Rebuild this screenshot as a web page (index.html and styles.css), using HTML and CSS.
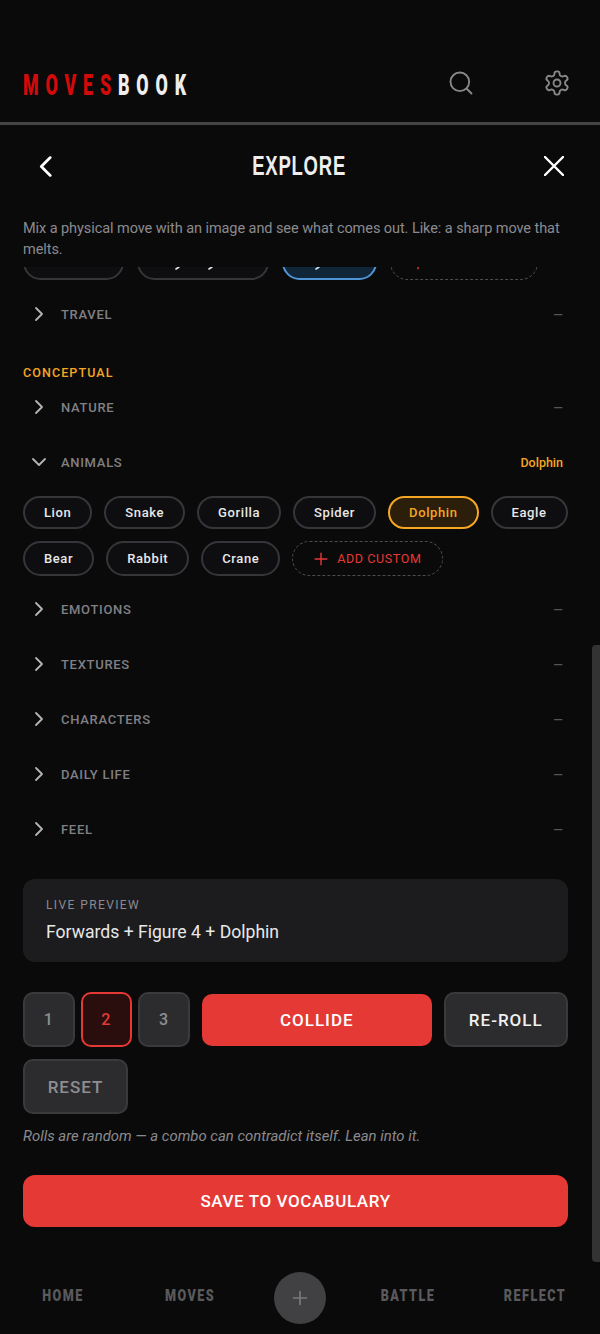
FILE: index.html
```html
<!DOCTYPE html>
<html lang="en">
<head>
    <meta charset="UTF-8">
    <meta name="viewport" content="width=device-width, initial-scale=1.0">
    <title>Movesbook - Explore</title>
    <link rel="stylesheet" href="styles.css">
</head>
<body>
    <div class="screen">
        <!-- Top header -->
        <header class="top-bar">
            <div class="logo"><span class="logo-red">MOVES</span><span class="logo-white">BOOK</span></div>
            <div class="top-icons">
                <svg class="icon-top" viewBox="0 0 24 24"><path d="m21 21-4.3-4.3"/><circle cx="11" cy="11" r="8"/></svg>
                <svg class="icon-top" viewBox="0 0 24 24"><path d="M12.22 2h-.44a2 2 0 0 0-2 2v.18a2 2 0 0 1-1 1.73l-.43.25a2 2 0 0 1-2 0l-.15-.08a2 2 0 0 0-2.73.73l-.22.38a2 2 0 0 0 .73 2.73l.15.1a2 2 0 0 1 1 1.72v.51a2 2 0 0 1-1 1.74l-.15.09a2 2 0 0 0-.73 2.73l.22.38a2 2 0 0 0 2.73.73l.15-.08a2 2 0 0 1 2 0l.43.25a2 2 0 0 1 1 1.73V20a2 2 0 0 0 2 2h.44a2 2 0 0 0 2-2v-.18a2 2 0 0 1 1-1.73l.43-.25a2 2 0 0 1 2 0l.15.08a2 2 0 0 0 2.73-.73l.22-.39a2 2 0 0 0-.73-2.73l-.15-.08a2 2 0 0 1-1-1.74v-.5a2 2 0 0 1 1-1.74l.15-.09a2 2 0 0 0 .73-2.73l-.22-.38a2 2 0 0 0-2.73-.73l-.15.08a2 2 0 0 1-2 0l-.43-.25a2 2 0 0 1-1-1.73V4a2 2 0 0 0-2-2z"/><circle cx="12" cy="12" r="3"/></svg>
            </div>
        </header>

        <!-- Title row -->
        <div class="title-bar">
            <svg class="icon-back" viewBox="0 0 12 20"><path d="M10.5 1.5 2 10l8.5 8.5"/></svg>
            <h1>EXPLORE</h1>
            <svg class="icon-close" viewBox="0 0 20 20"><path d="M1 1l18 18M19 1 1 19"/></svg>
        </div>

        <p class="intro">Mix a physical move with an image and see what comes out. Like: a sharp move that melts.</p>

        <!-- Scrolling list, already scrolled part way -->
        <main class="scroll-area">
            <!-- chip row scrolled under the intro, labels are out of view except for letter tails -->
            <div class="chips chips-cut">
                <span class="chip chip-a"></span>
                <span class="chip chip-b">
                    <svg class="tails tails-b" viewBox="0 0 36 3"><path d="M0 3l3-2M33 3l3-2"/></svg>
                </span>
                <span class="chip chip-blue">
                    <svg class="tails tails-blue" viewBox="0 0 4 3"><path d="M0 3l3-2"/></svg>
                </span>
                <span class="chip chip-add chip-d">
                    <svg class="icon-plus" viewBox="0 0 24 24"><path d="M5 12h14M12 5v14"/></svg>
                </span>
            </div>

            <div class="row">
                <svg class="chevron" viewBox="0 0 24 24"><path d="m9 18 6-6-6-6"/></svg>
                <span class="row-name">TRAVEL</span>
                <span class="row-value">—</span>
            </div>

            <div class="group-label">CONCEPTUAL</div>

            <div class="row">
                <svg class="chevron" viewBox="0 0 24 24"><path d="m9 18 6-6-6-6"/></svg>
                <span class="row-name">NATURE</span>
                <span class="row-value">—</span>
            </div>
            <div class="row">
                <svg class="chevron" viewBox="0 0 24 24"><path d="m6 9 6 6 6-6"/></svg>
                <span class="row-name">ANIMALS</span>
                <span class="row-value row-picked">Dolphin</span>
            </div>

            <div class="chips">
                <span class="chip">Lion</span>
                <span class="chip">Snake</span>
                <span class="chip">Gorilla</span>
                <span class="chip">Spider</span>
                <span class="chip chip-on">Dolphin</span>
                <span class="chip">Eagle</span>
                <span class="chip">Bear</span>
                <span class="chip">Rabbit</span>
                <span class="chip">Crane</span>
                <span class="chip chip-add">
                    <svg class="icon-plus" viewBox="0 0 24 24"><path d="M5 12h14M12 5v14"/></svg>
                    ADD CUSTOM
                </span>
            </div>

            <div class="row">
                <svg class="chevron" viewBox="0 0 24 24"><path d="m9 18 6-6-6-6"/></svg>
                <span class="row-name">EMOTIONS</span>
                <span class="row-value">—</span>
            </div>
            <div class="row">
                <svg class="chevron" viewBox="0 0 24 24"><path d="m9 18 6-6-6-6"/></svg>
                <span class="row-name">TEXTURES</span>
                <span class="row-value">—</span>
            </div>
            <div class="row">
                <svg class="chevron" viewBox="0 0 24 24"><path d="m9 18 6-6-6-6"/></svg>
                <span class="row-name">CHARACTERS</span>
                <span class="row-value">—</span>
            </div>
            <div class="row">
                <svg class="chevron" viewBox="0 0 24 24"><path d="m9 18 6-6-6-6"/></svg>
                <span class="row-name">DAILY LIFE</span>
                <span class="row-value">—</span>
            </div>
            <div class="row">
                <svg class="chevron" viewBox="0 0 24 24"><path d="m9 18 6-6-6-6"/></svg>
                <span class="row-name">FEEL</span>
                <span class="row-value">—</span>
            </div>

            <div class="preview">
                <div class="preview-label">LIVE PREVIEW</div>
                <div class="preview-value">Forwards + Figure 4 + Dolphin</div>
            </div>

            <div class="actions">
                <button class="btn btn-num">1</button>
                <button class="btn btn-num btn-num-on">2</button>
                <button class="btn btn-num">3</button>
                <button class="btn btn-collide">COLLIDE</button>
                <button class="btn btn-reroll">RE-ROLL</button>
                <button class="btn btn-reset">RESET</button>
            </div>

            <p class="note">Rolls are random — a combo can contradict itself. Lean into it.</p>

            <button class="btn-save">SAVE TO VOCABULARY</button>
        </main>

        <div class="scroll-thumb"></div>

        <!-- Bottom navigation -->
        <nav class="bottom-nav">
            <span class="nav-item">HOME</span>
            <span class="nav-item">MOVES</span>
            <span class="nav-add">
                <svg class="icon-nav-add" viewBox="0 0 24 24"><path d="M5 12h14M12 5v14"/></svg>
            </span>
            <span class="nav-item">BATTLE</span>
            <span class="nav-item">REFLECT</span>
        </nav>
    </div>
</body>
</html>
```

FILE: styles.css
```css
/* Page */
html, body {
    margin: 0;
    padding: 0;
    height: 1334px;
    overflow: hidden;
    background-color: #0a0a0b;
}
body {
    font-family: Roboto, "Liberation Sans", sans-serif;
    color: #fff;
}
svg {
    fill: none;
    stroke: currentColor;
    stroke-linecap: round;
    stroke-linejoin: round;
    flex-shrink: 0;
}
.screen {
    position: relative;
    display: flex;
    flex-direction: column;
    height: 1334px;
    overflow: hidden;
}

/* Header */
.top-bar {
    display: flex;
    justify-content: space-between;
    align-items: flex-end;
    box-sizing: border-box;
    height: 125px;
    padding: 0 29px 25px 23px;
    border-bottom: 3px solid #444;
}
/* no condensed face is installed, so the logo and title are squeezed */
.logo {
    margin-bottom: -3px;
    font-family: Roboto, "Liberation Sans", sans-serif;
    font-weight: 900;
    font-size: 30px;
    line-height: 30px;
    letter-spacing: 11.5px;
    white-space: nowrap;
    transform: scaleX(0.595);
    transform-origin: left center;
}
.logo-red {
    color: #d30a0a;
}
.logo-white {
    color: #eee;
}
.top-icons {
    display: flex;
    gap: 68px;
    color: #888;
}
.icon-top {
    width: 28px;
    height: 28px;
    stroke-width: 1.6;
}

/* Title row */
.title-bar {
    display: flex;
    justify-content: space-between;
    align-items: center;
    height: 82px;
    padding: 0 36px 0 39px;
}
.title-bar h1 {
    margin: 0 0 0 2px;
    font-family: "Liberation Sans", sans-serif;
    font-size: 28px;
    font-weight: 700;
    letter-spacing: 1.2px;
    color: #eee;
    transform: scaleX(0.66);
}
.icon-back {
    width: 13px;
    height: 21px;
    stroke-width: 2.6;
}
.icon-close {
    width: 20px;
    height: 20px;
    stroke-width: 2.4;
}
.intro {
    margin: 11px 0 7px;
    padding: 0 32px 0 23px;
    font-size: 14.5px;
    line-height: 21px;
    letter-spacing: -0.07px;
    color: #8b8b8f;
}

/* Scroll area */
.scroll-area {
    flex: 1;
    min-height: 0;
    overflow: hidden;
    padding: 0 32px 0 23px;
}
.chips {
    display: flex;
    flex-wrap: wrap;
    gap: 12px;
    margin: 6.5px 0 5.5px;
}
.chips-cut {
    flex-wrap: nowrap;
    gap: 13px;
    margin: -22px 0 6.5px;
}
.chip {
    display: inline-flex;
    align-items: center;
    justify-content: center;
    box-sizing: border-box;
    min-height: 33px;
    padding: 0 19px;
    border: 2px solid #36363a;
    border-radius: 18px;
    background-color: #0e0e10;
    font-size: 13px;
    font-weight: 500;
    letter-spacing: 0.6px;
    white-space: nowrap;
    color: #e8e8e8;
}
.chip-a { width: 101px; }
.chip-b {
    align-items: flex-end;
    width: 132px;
}
.chip-blue {
    align-items: flex-end;
    width: 95px;
    border-color: #4f94d4;
    background-color: #12263a;
    color: #cfe3f5;
}
.chip-d {
    justify-content: flex-start;
    width: 148px;
    padding: 0 0 0 17px;
}
.chip-on {
    border-color: #f5a623;
    background-color: #2b1e0a;
    color: #f5a623;
}
.chip-add {
    gap: 6px;
    min-height: 35px;
    border: 1px dashed #4d4d50;
    background-color: transparent;
    font-size: 12.5px;
    font-weight: 400;
    letter-spacing: 0.6px;
    color: #e53935;
}
.chip-add:not(.chip-d) {
    padding: 0 21px 0 18px;
}
.icon-plus {
    width: 20px;
    height: 20px;
    stroke-width: 1.7;
}
.tails {
    height: 3px;
    margin-bottom: 9px;
    overflow: visible;
    stroke-width: 1.6;
}
.tails-b {
    width: 36px;
    margin-right: 19px;
}
.tails-blue {
    width: 4px;
    margin-right: 23px;
}

/* Category rows */
.row {
    display: flex;
    align-items: center;
    gap: 10px;
    height: 55px;
    padding: 0 5px 0 4px;
}
.chevron {
    width: 24px;
    height: 24px;
    stroke-width: 1.8;
    color: #b5b5b5;
}
.row-name {
    flex: 1;
    font-size: 13px;
    font-weight: 500;
    letter-spacing: 0.7px;
    color: #808084;
}
.row-value {
    font-size: 12.5px;
    font-weight: 500;
    color: #555;
}
.row-picked {
    color: #f5a623;
}
.group-label {
    margin: 23px 0 0;
    font-size: 12.5px;
    font-weight: 500;
    line-height: 15px;
    letter-spacing: 1.1px;
    color: #f5a623;
}

/* Live preview */
.preview {
    box-sizing: border-box;
    height: 83px;
    margin-top: 22.5px;
    padding: 18px 23px 0;
    border-radius: 12px;
    background-color: #1c1c1f;
}
.preview-label {
    font-size: 12px;
    line-height: 16px;
    letter-spacing: 1.4px;
    color: #8b8b8f;
}
.preview-value {
    margin-top: 7px;
    font-size: 17.6px;
    line-height: 24px;
    color: #e8e8e8;
}

/* Action buttons */
.actions {
    display: flex;
    flex-wrap: wrap;
    align-items: center;
    gap: 12px;
    margin-top: 30px;
}
.btn {
    box-sizing: border-box;
    height: 55px;
    border: 2px solid #3a3a3d;
    border-radius: 10px;
    background-color: #2c2c2f;
    font-family: inherit;
    font-size: 17px;
    font-weight: 500;
    letter-spacing: 1px;
    color: #8e8e92;
}
.btn-num {
    width: 51.6px;
    margin-right: -6px;
    padding: 0;
    font-size: 16px;
}
.btn-num-on {
    border-color: #e53935;
    background-color: #2a0d0d;
    color: #e53935;
}
.btn-collide {
    width: 230px;
    height: 52px;
    margin-left: 6px;
    border: 0;
    background-color: #e53935;
    color: #fff;
}
.btn-reroll {
    width: 124px;
    color: #f0f0f0;
}
.btn-reset {
    width: 105px;
}
.note {
    margin: 12px 0 0;
    font-size: 14.9px;
    line-height: 20px;
    font-style: italic;
    color: #8b8b8f;
}
.btn-save {
    display: block;
    width: 100%;
    height: 52px;
    margin-top: 29px;
    border: 0;
    border-radius: 12px;
    background-color: #e53935;
    font-family: inherit;
    font-size: 17px;
    font-weight: 500;
    letter-spacing: 0.6px;
    color: #fff;
}

/* Overlay scrollbar */
.scroll-thumb {
    position: absolute;
    top: 645px;
    right: 0;
    width: 8px;
    height: 617px;
    border-radius: 4px 0 0 4px;
    background-color: #333;
}

/* Bottom nav */
.bottom-nav {
    display: grid;
    grid-template-columns: 126px 128px 92px 124px 130px;
    align-items: start;
    height: 72px;
    padding-top: 10px;
    box-sizing: border-box;
}
.nav-item {
    margin-top: 13px;
    font-family: Roboto, "Liberation Sans", sans-serif;
    font-size: 17px;
    font-weight: 900;
    line-height: 20px;
    letter-spacing: 2px;
    text-align: center;
    color: #5a5a5c;
    transform: scaleX(0.74);
}
.nav-add {
    display: flex;
    align-items: center;
    justify-content: center;
    width: 52px;
    height: 52px;
    margin: 0 auto;
    border-radius: 50%;
    background-color: #414144;
    color: #7a7a7c;
}
.icon-nav-add {
    width: 22px;
    height: 22px;
    stroke-width: 1.8;
}
```
